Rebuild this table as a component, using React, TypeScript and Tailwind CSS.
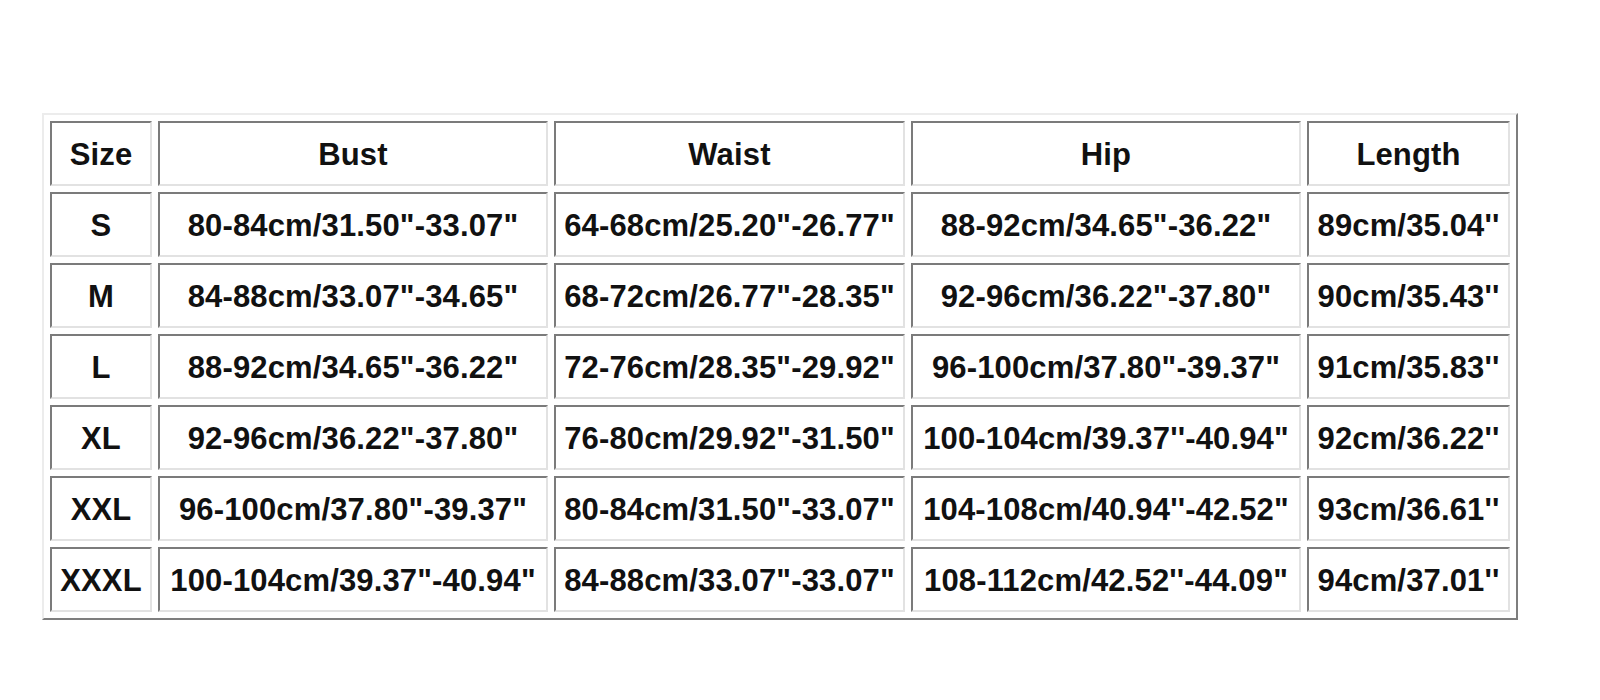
import React from 'react';

const headers = ['Size', 'Bust', 'Waist', 'Hip', 'Length'];
const widths = ['w-[102px]', 'w-[390px]', 'w-[351px]', 'w-[390px]', 'w-[203px]'];

const rows: string[][] = [
  ['S', '80-84cm/31.50"-33.07"', '64-68cm/25.20"-26.77"', '88-92cm/34.65"-36.22"', "89cm/35.04''"],
  ['M', '84-88cm/33.07"-34.65"', '68-72cm/26.77"-28.35"', '92-96cm/36.22"-37.80"', "90cm/35.43''"],
  ['L', '88-92cm/34.65"-36.22"', '72-76cm/28.35"-29.92"', '96-100cm/37.80"-39.37"', "91cm/35.83''"],
  ['XL', '92-96cm/36.22"-37.80"', '76-80cm/29.92"-31.50"', "100-104cm/39.37''-40.94\"", "92cm/36.22''"],
  ['XXL', '96-100cm/37.80"-39.37"', '80-84cm/31.50"-33.07"', "104-108cm/40.94''-42.52\"", "93cm/36.61''"],
  ['XXXL', '100-104cm/39.37"-40.94"', '84-88cm/33.07"-33.07"', "108-112cm/42.52''-44.09\"", "94cm/37.01''"],
];

// old-school border=1 cell: dark top/left, light bottom/right
const cell =
  'h-[65px] p-0 pt-[3px] text-center align-middle whitespace-nowrap border-2 border-t-[#7b7b7b] border-l-[#7b7b7b] border-b-[#e2e2e2] border-r-[#e2e2e2]';

export default function App() {
  return (
    <div className="min-h-[700px] w-[1600px] bg-white pt-[113px] pl-[42px] font-['Liberation_Sans',Arial,sans-serif] text-[31px] tracking-[0.15px] font-bold text-[#111]">
      <table className="table-fixed border-separate border-spacing-[6px] border-2 border-t-[#ececec] border-l-[#ececec] border-b-[#7e7e7e] border-r-[#7e7e7e]">
        <thead>
          <tr>
            {headers.map((h, i) => (
              <th key={h} className={`${cell} ${widths[i]} font-bold`}>
                {h}
              </th>
            ))}
          </tr>
        </thead>
        <tbody>
          {rows.map(r => (
            <tr key={r[0]}>
              {r.map((v, i) => (
                <td key={i} className={`${cell} ${widths[i]}`}>
                  {v}
                </td>
              ))}
            </tr>
          ))}
        </tbody>
      </table>
    </div>
  );
}
